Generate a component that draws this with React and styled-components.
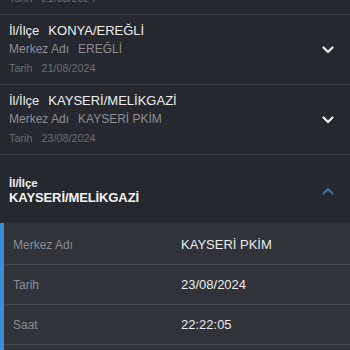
import React from "react";
import styled, { createGlobalStyle } from "styled-components";

const GlobalStyle = createGlobalStyle`
  html, body {
    margin: 0;
    padding: 0;
    overflow: hidden;
    background: #25282e;
  }
  body {
    font-family: "Liberation Sans", Arial, sans-serif;
    -webkit-font-smoothing: antialiased;
  }
`;

const List = styled.div`
  display: flex;
  flex-direction: column;
  width: 350px;
  background: #25282e;
`;

const Item = styled.div`
  display: flex;
  align-items: center;
  justify-content: space-between;
  height: 69px;
  padding: 0 16px 0 9px;
  box-sizing: content-box;
  border-bottom: 1px solid #3c3f46;
  margin-top: ${(p) => (p.$offset ? `-${p.$offset}px` : "0")};
`;

const Info = styled.div`
  display: flex;
  flex-direction: column;
`;

const Line = styled.div`
  display: flex;
  align-items: baseline;
  gap: 9px;
  height: 18.5px;
  line-height: 18.5px;
  white-space: nowrap;
`;

const TitleText = styled.span`
  font-size: 13px;
  color: #eeeff1;
`;

const CenterText = styled.span`
  font-size: 12px;
  color: #8c8e94;
`;

const DateText = styled.span`
  font-size: 10.8px;
  color: #6a6d73;
`;

const ExpandedHeader = styled.div`
  display: flex;
  align-items: center;
  justify-content: space-between;
  padding: 21px 16px 17px 9px;
  height: 30px;
  box-sizing: content-box;
`;

const HeadLabel = styled.div`
  font-size: 11.5px;
  font-weight: bold;
  line-height: 14px;
  color: #f2f2f4;
`;

const HeadValue = styled.div`
  font-size: 13px;
  font-weight: bold;
  line-height: 16px;
  color: #f4f4f6;
  letter-spacing: -0.1px;
`;

const Panel = styled.div`
  background: #30333a;
  border-left: 4px solid #3b8ed6;
  padding: 2px 0 14px;
`;

const Row = styled.div`
  display: grid;
  grid-template-columns: 168px 1fr;
  align-items: center;
  height: 39px;
  padding-left: 9px;
  border-bottom: 1px solid #44474f;
`;

const RowLabel = styled.span`
  font-size: 12px;
  color: #8a8c92;
`;

const RowValue = styled.span`
  font-size: 13px;
  color: #ececee;
`;

const Chevron = ({ up, color }) => (
  <svg width="12" height="8" viewBox="0 0 12 8" fill="none">
    <polyline
      points={up ? "1.5,6.5 6,2 10.5,6.5" : "1.5,1.5 6,6 10.5,1.5"}
      stroke={color}
      strokeWidth="2.2"
      strokeLinecap="round"
      strokeLinejoin="round"
    />
  </svg>
);

const items = [
  { il: "KONYA/KARATAY", merkez: "KARATAY", tarih: "21/08/2024" },
  { il: "KONYA/EREĞLİ", merkez: "EREĞLİ", tarih: "21/08/2024" },
  { il: "KAYSERİ/MELİKGAZİ", merkez: "KAYSERİ PKİM", tarih: "23/08/2024" },
];

const details = [
  { label: "Merkez Adı", value: "KAYSERİ PKİM" },
  { label: "Tarih", value: "23/08/2024" },
  { label: "Saat", value: "22:22:05" },
];

export default function App() {
  return (
    <>
      <GlobalStyle />
      <List>
        {items.map((it, i) => (
          <Item key={i} $offset={i === 0 ? 55 : 0}>
            <Info>
              <Line>
                <TitleText>İl/İlçe</TitleText>
                <TitleText>{it.il}</TitleText>
              </Line>
              <Line>
                <CenterText>Merkez Adı</CenterText>
                <CenterText>{it.merkez}</CenterText>
              </Line>
              <Line>
                <DateText>Tarih</DateText>
                <DateText>{it.tarih}</DateText>
              </Line>
            </Info>
            <Chevron color="#f2f2f2" />
          </Item>
        ))}
        <ExpandedHeader>
          <Info>
            <HeadLabel>İl/İlçe</HeadLabel>
            <HeadValue>KAYSERİ/MELİKGAZİ</HeadValue>
          </Info>
          <Chevron up color="#3e6f9f" />
        </ExpandedHeader>
        <Panel>
          {details.map((d) => (
            <Row key={d.label}>
              <RowLabel>{d.label}</RowLabel>
              <RowValue>{d.value}</RowValue>
            </Row>
          ))}
        </Panel>
      </List>
    </>
  );
}
